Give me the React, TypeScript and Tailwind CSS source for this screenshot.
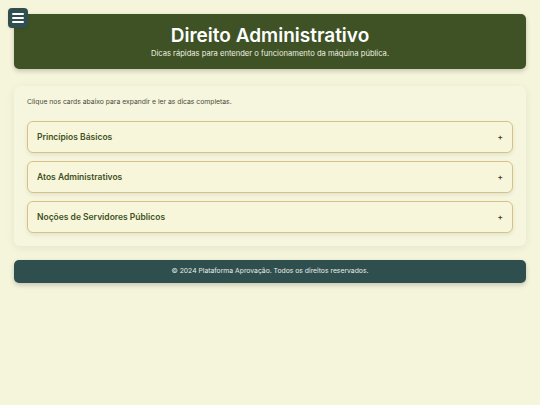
import React, { useState } from "react";

const topics = [
  {
    title: "Princípios Básicos",
    text: "Legalidade, impessoalidade, moralidade, publicidade e eficiência (LIMPE).",
  },
  {
    title: "Atos Administrativos",
    text: "Competência, finalidade, forma, motivo e objeto são os elementos do ato.",
  },
  {
    title: "Noções de Servidores Públicos",
    text: "Cargo, emprego e função pública: entenda as diferenças.",
  },
];

const App = () => {
  const [open, setOpen] = useState<number | null>(null);

  return (
    <div
      className="min-h-[405px] bg-[#f5f5dc] px-[14px] py-[14px] text-[#333]"
      style={{ fontFamily: "Inter, 'Noto Sans', sans-serif" }}
    >
      <button
        type="button"
        className="fixed left-[8px] top-[8px] z-10 flex h-[20px] w-[20px] flex-col items-center justify-center gap-[2px] rounded-[4px] bg-[#2f4f4f] shadow"
      >
        <span className="block h-[2px] w-[12px] rounded bg-white" />
        <span className="block h-[2px] w-[12px] rounded bg-white" />
        <span className="block h-[2px] w-[12px] rounded bg-white" />
      </button>

      <header className="flex h-[55px] flex-col items-center justify-center rounded-[5px] bg-[#3e5225] text-white shadow-[0_2px_5px_rgba(0,0,0,0.2)]">
        <h1 className="text-[19px] font-semibold leading-[23px]">Direito Administrativo</h1>
        <p className="mt-[2px] text-[7.6px] leading-[10px] text-[#eef0e0]">
          Dicas rápidas para entender o funcionamento da máquina pública.
        </p>
      </header>

      <main className="mt-[17px] rounded-[6px] bg-[#f6f6de] px-[13px] pb-[13px] pt-[11px] shadow-[0_2px_8px_rgba(0,0,0,0.07)]">
        <p className="text-[6.8px] leading-[10px] text-[#4a4a3a]">
          Clique nos cards abaixo para expandir e ler as dicas completas.
        </p>
        <div className="mt-[14px] flex flex-col gap-[8px]">
          {topics.map((t, i) => (
            <div
              key={t.title}
              onClick={() => setOpen(open === i ? null : i)}
              className="cursor-pointer rounded-[6px] border border-[#d7c188] bg-[#f8f6da] shadow-[0_2px_4px_rgba(0,0,0,0.08)]"
            >
              <div className="flex h-[30px] items-center justify-between px-[9px]">
                <span className="text-[8.5px] font-semibold text-[#3e5225]">{t.title}</span>
                <span className="text-[8px] font-semibold text-[#333]">{open === i ? "−" : "+"}</span>
              </div>
              {open === i && (
                <div className="px-[9px] pb-[8px] text-[8px] text-[#444]">{t.text}</div>
              )}
            </div>
          ))}
        </div>
      </main>

      <footer className="mt-[14px] flex h-[23px] items-center justify-center rounded-[5px] bg-[#2f4f4f] text-[6.8px] text-[#e8ece8] shadow-[0_2px_5px_rgba(0,0,0,0.2)]">
        © 2024 Plataforma Aprovação. Todos os direitos reservados.
      </footer>
    </div>
  );
};

export default App;
